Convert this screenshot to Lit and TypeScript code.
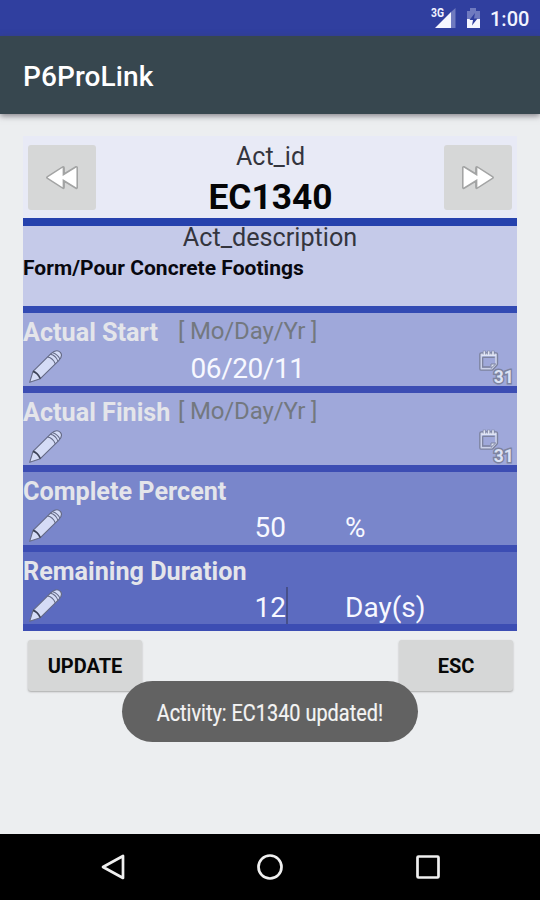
import { LitElement, html, svg, css, nothing } from "lit";
import { customElement } from "lit/decorators.js";

const pencil = svg`
  <path d="M2 97 L12 64 L66 11 Q82 -4 94 7 Q103 17 89 32 L34 86 Z" fill="#d5dcf6" stroke="#646a86" stroke-width="3.4" stroke-linejoin="round"/>
  <path d="M12 64 Q26 68 34 86" fill="none" stroke="#3c4257" stroke-width="5"/>
  <path d="M56 21 Q72 24 79 42 M64 13 Q80 16 87 34 M71 8 Q84 11 93 27" fill="none" stroke="#646a86" stroke-width="3.2"/>`;

const forward = svg`
  <path d="M5 4 L47 29 V4 L97 36 L47 68 V43 L5 68 Z" fill="#fff" stroke="#a3a4a4" stroke-width="10" stroke-linejoin="round"/>
  <path d="M47 6 V66" stroke="#a3a4a4" stroke-width="8" fill="none"/>
  <path d="M5 4 L50 32 V40 L5 68 Z M49 5 L97 36 L49 67 Z" fill="#fff"/>`;

@customElement("field-row")
class FieldRow extends LitElement {
  static properties = {
    label: {}, hint: {}, value: {}, unit: {},
    calendar: { type: Boolean }, caret: { type: Boolean },
  };
  declare label: string;
  declare hint: string;
  declare value: string;
  declare unit: string;
  declare calendar: boolean;
  declare caret: boolean;

  static styles = css`
    :host { display: block; height: 72.5px; border-bottom: 7px solid #3c4db3; }
    .top { display: grid; grid-template-columns: 155px 1fr; height: 38px; line-height: 40px; white-space: nowrap; }
    .label { font-size: 25.2px; font-weight: 700; color: #e4e5ea; }
    .hint { font-size: 24px; line-height: 36px; letter-spacing: -0.15px; color: #73787f; }
    .bottom { display: grid; grid-template-columns: 39px 224px 1fr 39px; height: 34.5px; line-height: 35.5px; font-size: 28px; color: #f7f8ff; }
    .bottom.date { grid-template-columns: 39px 242.5px 1fr 39px; letter-spacing: -0.45px; }
    .pencil { width: 34px; height: 34px; margin: -1px 0 0 6px; }
    .value { display: flex; justify-content: flex-end; align-items: center; }
    .caret { width: 2px; height: 37px; background: #47508a; margin: -3px -2px 0 0; }
    .unit { padding-left: 59px; }
    .cal { width: 34px; height: 35px; margin: -1.5px 0 0 1px; overflow: visible; }
    .day { font: 700 56px Roboto, sans-serif; letter-spacing: 0; }
  `;

  render() {
    return html`
      <div class="top"><span class="label">${this.label}</span><span class="hint">${this.hint ?? ""}</span></div>
      <div class="bottom ${this.calendar ? "date" : ""}">
        <svg class="pencil" viewBox="0 0 102 102">${pencil}</svg>
        <span class="value">${this.value ?? ""}${this.caret ? html`<i class="caret"></i>` : nothing}</span>
        <span class="unit">${this.unit ?? ""}</span>
        ${this.calendar ? html`<svg class="cal" viewBox="0 0 102 105">
          <path d="M7 13 H51 V42 L38 56 H7 Z" fill="#9fa8da" stroke="#7d839f" stroke-width="13" stroke-linejoin="round"/>
          <path d="M7 13 H51 V42 L38 56 H7 Z" fill="#9fa8da" stroke="#ccd2ea" stroke-width="5" stroke-linejoin="round"/>
          <path d="M16 2 V17 M29 2 V17 M42 2 V17" stroke="#7d839f" stroke-width="9"/>
          <path d="M7 16 H51 M16 4 V17 M29 4 V17 M42 4 V17" stroke="#e0e5f5" stroke-width="5"/>
          <path d="M11 22 H47 M11 22 V51 H33" fill="none" stroke="#7d839f" stroke-width="4"/>
          <path d="M36 55 V42 H50 Z" fill="#dfe4f4" stroke="#7d839f" stroke-width="3"/>
          <text class="day" x="44" y="99" textLength="60" lengthAdjust="spacingAndGlyphs" fill="#dde2f3" stroke="#7d839f" stroke-width="9" paint-order="stroke">31</text>
        </svg>` : nothing}
      </div>`;
  }
}

@customElement("app-root")
class AppRoot extends LitElement {
  static styles = css`
    :host { display: flex; flex-direction: column; height: 900px; width: 540px; overflow: hidden; position: relative;
      background: #eceef0; font-family: Roboto, sans-serif; white-space: nowrap; }
    .status { height: 36px; background: #303f9f; display: flex; align-items: center; justify-content: flex-end; color: #f2f4ff; }
    .status svg { width: 56px; height: 36px; overflow: visible; }
    .tag { font: 700 12px Roboto, sans-serif; }
    .clock { font-size: 20px; font-weight: 500; width: 50px; padding-top: 2px; }
    .bar { height: 78px; background: #37474f; box-shadow: 0 2px 6px rgba(60, 55, 65, .6); display: flex; align-items: center; }
    .title { margin-left: 23px; padding-top: 2px; font-size: 28px; letter-spacing: 0.1px; font-weight: 500; color: #fff; }
    .content { flex: 1; padding: 22px 23px 0; }
    .head { height: 82px; background: #e8eaf6; display: grid; grid-template-columns: 68px 1fr 68px; padding: 0 5px; box-sizing: border-box; }
    .square { margin-top: 9px; height: 65px; border-radius: 3px; background: #d6d7d7; display: flex; align-items: center; justify-content: center; }
    .square svg { width: 32px; height: 23px; overflow: visible; }
    .back { transform: scaleX(-1); }
    .id { text-align: center; padding-left: 1px; }
    .caption { font-size: 25px; line-height: 41px; color: #34353e; }
    .code { font-size: 35.3px; line-height: 41px; font-weight: 700; color: #050507; }
    .desc { height: 80px; background: #c5cae9; border-top: 8px solid #2541ad; border-bottom: 7px solid #324ab3; text-align: center; }
    .desc .caption { font-size: 25.2px; line-height: 24px; height: 27px; }
    .text { text-align: left; font-size: 21px; letter-spacing: 0.04px; font-weight: 700; line-height: 31px; color: #08080f; }
    .light { background: #9fa8da; }
    .mid { background: #7986cb; }
    .deep { background: #5c6bc0; }
    .actions { display: flex; justify-content: space-between; padding: 9px 4px 0 5px; }
    .action { width: 114px; height: 51px; border-radius: 3px; background: #d6d7d7; box-shadow: 0 1px 2px #aaa; text-align: center; line-height: 52px; font-size: 20px; font-weight: 700; color: #080808; }
    .toast { position: absolute; left: 122px; top: 681px; width: 296px; height: 61px; border-radius: 31px; background: #626262; display: flex; justify-content: center; align-items: center; color: #f4f4f4; font-size: 23px; }
    .message { transform: scaleX(.865); padding-top: 3px; -webkit-text-stroke: 0.2px #f4f4f4; }
    .nav { height: 66px; background: #000; display: flex; justify-content: center; align-items: center; gap: 129.5px; }
    .nav svg { width: 28px; height: 28px; fill: none; stroke: #f0f0f0; stroke-width: 2.7; stroke-linejoin: round; }
  `;

  render() {
    return html`
      <div class="status">
        <svg viewBox="0 0 56 36">
          <path d="M17 12 V28 H1 Z" fill="#f5f6ff"/>
          <path d="M17 12 L21.500 8 V28 H17 Z" fill="#6f7abf"/>
          <text class="tag" x="-3" y="17" textLength="13" lengthAdjust="spacingAndGlyphs" fill="#f0f2ff" stroke="#303f9f" stroke-width="1.500" paint-order="stroke">3G</text>
          <path d="M33 11 H36 V8 H42 V11 H46 V28 H33 Z" fill="#6f7abf"/>
          <path d="M33 19 H46 V28 H33 Z" fill="#f5f6ff"/>
          <path d="M41 13 L35.500 20 H39 L38 25.500 L43.500 18.500 H40 Z" fill="#303f9f"/>
        </svg>
        <span class="clock">1:00</span>
      </div>
      <div class="bar"><span class="title">P6ProLink</span></div>
      <div class="content">
        <div class="head">
          <div class="square back"><svg viewBox="0 0 102 72">${forward}</svg></div>
          <div class="id"><div class="caption">Act_id</div><div class="code">EC1340</div></div>
          <div class="square"><svg viewBox="0 0 102 72">${forward}</svg></div>
        </div>
        <div class="desc"><div class="caption">Act_description</div><div class="text">Form/Pour Concrete Footings</div></div>
        <field-row class="light" label="Actual Start" hint="[ Mo/Day/Yr ]" value="06/20/11" calendar></field-row>
        <field-row class="light" label="Actual Finish" hint="[ Mo/Day/Yr ]" calendar></field-row>
        <field-row class="mid" label="Complete Percent" value="50" unit="%"></field-row>
        <field-row class="deep" label="Remaining Duration" value="12" unit="Day(s)" caret></field-row>
        <div class="actions"><div class="action">UPDATE</div><div class="action">ESC</div></div>
      </div>
      <div class="nav">
        <svg viewBox="0 0 28 28"><path d="M24 3 V25 L4 14 Z"/></svg>
        <svg viewBox="0 0 28 28"><circle cx="14" cy="14" r="11.500"/></svg>
        <svg viewBox="0 0 28 28"><rect x="3.500" y="3.500" width="21" height="21" rx="1"/></svg>
      </div>
      <div class="toast"><span class="message">Activity: EC1340 updated!</span></div>`;
  }
}
